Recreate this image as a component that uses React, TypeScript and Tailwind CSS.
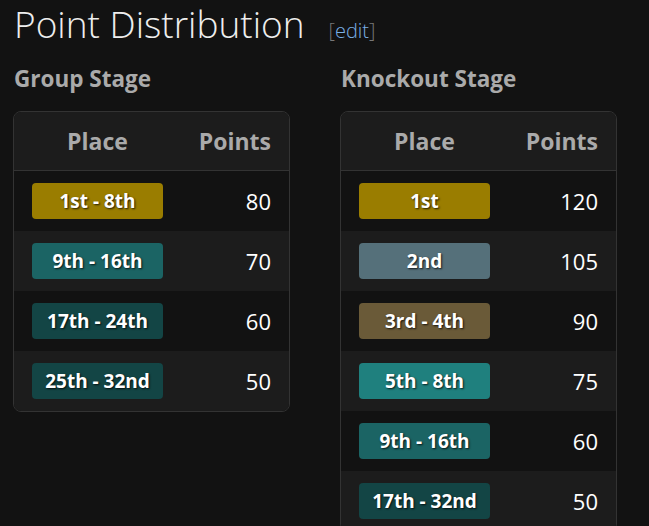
const groupStage = [
  { place: "1st - 8th", points: 80, color: "bg-[#9a7d00]" },
  { place: "9th - 16th", points: 70, color: "bg-[#1b6464]" },
  { place: "17th - 24th", points: 60, color: "bg-[#134545]" },
  { place: "25th - 32nd", points: 50, color: "bg-[#134545]" },
];

const knockoutStage = [
  { place: "1st", points: 120, color: "bg-[#9a7d00]" },
  { place: "2nd", points: 105, color: "bg-[#55707a]" },
  { place: "3rd - 4th", points: 90, color: "bg-[#6a5a38]" },
  { place: "5th - 8th", points: 75, color: "bg-[#1f807e]" },
  { place: "9th - 16th", points: 60, color: "bg-[#1b6464]" },
  { place: "17th - 32nd", points: 50, color: "bg-[#134545]" },
];

type Row = { place: string; points: number; color: string };

function StageTable({ title, rows }: { title: string; rows: Row[] }) {
  return (
    <section className="w-[277px]">
      <h2 className="pl-px text-[22.5px] font-bold leading-[30px] text-[#aaaaaa]">{title}</h2>
      <div className="mt-[17px] overflow-hidden rounded-lg border border-[#333333]">
        <div className="flex h-[59px] items-center border-b border-[#333333] bg-[#1c1c1c] px-[18px] text-[23px] font-bold text-[#aaaaaa]">
          <div className="w-[131px] text-center">Place</div>
          <div className="flex-1 text-right">Points</div>
        </div>
        {rows.map((row, i) => (
          <div
            key={row.place}
            className={`flex h-[60px] items-center px-[18px] ${i % 2 === 0 ? "bg-[#121212]" : "bg-[#1c1c1c]"}`}
          >
            <div
              className={`flex h-[36px] w-[131px] items-center justify-center rounded ${row.color} text-[19px] font-bold text-white [text-shadow:1px_1px_2px_rgba(0,0,0,0.8)]`}
            >
              {row.place}
            </div>
            <div className="flex-1 text-right text-[22px] text-white">{row.points}</div>
          </div>
        ))}
      </div>
    </section>
  );
}

export default function App() {
  return (
    <div className="min-h-[526px] bg-[#121212] pl-[13px] font-['Open_Sans',sans-serif]">
      <div className="flex items-baseline gap-[24px] pl-px">
        <h1 className="text-[37px] font-light leading-[48px] text-[#eeeeee]">Point Distribution</h1>
        <span className="text-[20px] font-light text-[#777777]">
          [<span className="text-[#7ab0e6]">edit</span>]
        </span>
      </div>
      <div className="mt-[16px] flex gap-[50px]">
        <StageTable title="Group Stage" rows={groupStage} />
        <StageTable title="Knockout Stage" rows={knockoutStage} />
      </div>
    </div>
  );
}
